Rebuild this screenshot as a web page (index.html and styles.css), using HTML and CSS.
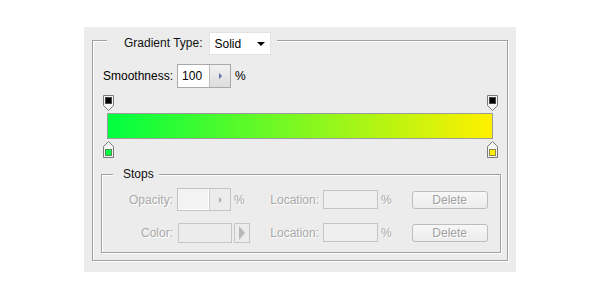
FILE: index.html
```html
<!DOCTYPE html>
<html>
<head>
<title>Gradient Editor</title>
<link rel="stylesheet" href="styles.css">
</head>
<body>

<div class="panel">
  <!-- Gradient group -->
  <fieldset class="group gradient-group">
    <legend class="group-title">
      <span class="title-text">Gradient Type:</span>
      <div class="dropdown"><span>Solid</span><span class="caret"></span></div>
    </legend>

    <div class="smooth-row">
      <span class="label">Smoothness:</span>
      <div class="spin">
        <span class="spin-value">100</span>
        <span class="spin-btn"><span class="tri"></span></span>
      </div>
      <span class="unit">%</span>
    </div>

    <!-- Opacity stops -->
    <div class="stop-row">
      <svg class="marker" width="11" height="16" viewBox="0 0 11 16">
        <path d="M0.5 0.5H10.5V10.5L5.5 15.5L0.5 10.5Z" fill="#f4f4f4" stroke="#7a7a7a"/>
        <rect x="2.5" y="2.5" width="6" height="6" fill="#000" stroke="#444"/>
      </svg>
      <svg class="marker" width="11" height="16" viewBox="0 0 11 16">
        <path d="M0.5 0.5H10.5V10.5L5.5 15.5L0.5 10.5Z" fill="#f4f4f4" stroke="#7a7a7a"/>
        <rect x="2.5" y="2.5" width="6" height="6" fill="#000" stroke="#444"/>
      </svg>
    </div>

    <div class="gradient-bar"></div>

    <!-- Color stops -->
    <div class="stop-row bottom">
      <svg class="marker" width="11" height="17" viewBox="0 0 11 17">
        <path d="M5.5 0.5L10.5 5.5V16.5H0.5V5.5Z" fill="#f4f4f4" stroke="#7a7a7a"/>
        <rect x="2.5" y="8.5" width="6" height="6" fill="#00ff40" stroke="#5a8a5a"/>
      </svg>
      <svg class="marker" width="11" height="17" viewBox="0 0 11 17">
        <path d="M5.5 0.5L10.5 5.5V16.5H0.5V5.5Z" fill="#f4f4f4" stroke="#7a7a7a"/>
        <rect x="2.5" y="8.5" width="6" height="6" fill="#fff000" stroke="#8a8a50"/>
      </svg>
    </div>

    <!-- Stops group -->
    <fieldset class="group stops-group">
      <legend class="stops-title">Stops</legend>

      <div class="field-row first">
        <span class="field-label">Opacity:</span>
        <div class="field-cell">
          <div class="spin off">
            <span class="spin-value"></span>
            <span class="spin-btn"><span class="tri"></span></span>
          </div>
          <span class="unit off">%</span>
        </div>
        <span class="loc-label">Location:</span>
        <div class="loc-input"></div>
        <span class="unit off loc-unit">%</span>
        <div class="btn">Delete</div>
      </div>

      <div class="field-row">
        <span class="field-label">Color:</span>
        <div class="field-cell">
          <div class="swatch"></div>
          <div class="swatch-btn"><span class="big-tri"></span></div>
        </div>
        <span class="loc-label">Location:</span>
        <div class="loc-input"></div>
        <span class="unit off loc-unit">%</span>
        <div class="btn">Delete</div>
      </div>
    </fieldset>
  </fieldset>
</div>

</body>
</html>
```

FILE: styles.css
```css
/* Page */
body {
  margin: 0;
  background: #fff;
  font-family: 'Liberation Sans', Arial, sans-serif;
  font-size: 12px;
  color: #111;
}

/* Grey dialog panel */
.panel {
  width: 432px;
  height: 245px;
  margin: 27px 84px 0;
  padding: 5px 0 0 8px;
  box-sizing: border-box;
  background: #ececec;
  overflow: hidden;
}

/* Etched group boxes */
.group {
  margin: 0;
  min-width: 0;
  box-sizing: border-box;
  border: 1px solid #a0a0a0;
  box-shadow: 1px 1px 0 #fff, inset 1px 1px 0 #fff;
}

.gradient-group {
  width: 416px;
  padding: 0 0 7px 8px;
}

.group-title {
  display: flex;
  align-items: flex-start;
  gap: 6px;
  height: 16px;
  margin-left: 6px;
  padding: 0 6px 0 17px;
  background: #ececec;
}

.title-text { line-height: 23px; }

/* Fake dropdown */
.dropdown {
  display: flex;
  align-items: center;
  justify-content: space-between;
  width: 62px;
  height: 23px;
  padding: 0 5px;
  box-sizing: border-box;
  background: #fff;
  border: 1px solid #e2e2e2;
  color: #000;
}

.caret {
  border-left: 4px solid transparent;
  border-right: 4px solid transparent;
  border-top: 4px solid #000;
  margin-top: 1px;
}

/* Smoothness row */
.smooth-row {
  display: flex;
  align-items: center;
  height: 24px;
  margin-top: 16px;
  padding-left: 2px;
}

.label { margin-right: 4px; color: #000; }

.unit { margin-left: 4px; color: #000; }

/* Spin box */
.spin {
  display: flex;
  width: 54px;
  height: 24px;
  box-sizing: border-box;
  border: 1px solid #a9a9a9;
}

.spin-value {
  width: 31px;
  padding-left: 4px;
  box-sizing: border-box;
  background: #fff;
  line-height: 22px;
  color: #000;
}

.spin-btn {
  flex: 1;
  display: flex;
  align-items: center;
  justify-content: center;
  border-left: 1px solid #bdbdbd;
  background: linear-gradient(#f2f2f2, #dcdcdc);
}

.tri {
  border-top: 3px solid transparent;
  border-bottom: 3px solid transparent;
  border-left: 3px solid #5b6ea6;
}

/* Gradient stops and bar */
.stop-row {
  display: flex;
  justify-content: space-between;
  width: 395px;
  height: 16px;
  margin: 7px 0 0 2px;
}

.stop-row.bottom {
  height: 17px;
  margin-top: 2px;
}

.marker { display: block; }

.gradient-bar {
  width: 386px;
  height: 26px;
  margin: 2px 0 0 6px;
  box-sizing: border-box;
  border: 1px solid #9c9c9c;
  background: linear-gradient(to right, #00ff40, #fff000);
}

/* Stops group */
.stops-group {
  width: 400px;
  margin-top: 9px;
  padding: 0 0 8px 11px;
}

.stops-title {
  padding: 0 5px 0 10px;
  line-height: 14px;
  background: #ececec;
  color: #111;
}

.field-row {
  display: flex;
  align-items: center;
  height: 23px;
  margin-top: 10px;
  color: #a9a9a9;
  text-shadow: 1px 1px 0 #fff;
}

.field-row.first { margin-top: 7px; }

.field-label {
  width: 60px;
  margin-right: 4px;
  text-align: right;
}

.field-cell {
  display: flex;
  align-items: center;
  width: 87px;
}

.spin.off {
  height: 23px;
  border-color: #c4c4c4;
}

.spin.off .spin-value {
  background: #f3f3f3;
  box-shadow: inset -1px -1px 0 #fff;
}

.spin.off .spin-btn {
  border-left-color: #cfcfcf;
  background: #ececec;
}

.spin.off .tri { border-left-color: #b0b0b0; }

.unit.off { margin-left: 3px; color: #a9a9a9; }

.swatch {
  width: 54px;
  height: 20px;
  margin-left: 1px;
  box-sizing: border-box;
  border: 1px solid #c6c6c6;
  background: #ececec;
}

.swatch-btn {
  display: flex;
  align-items: center;
  justify-content: center;
  width: 16px;
  height: 20px;
  margin-left: 2px;
  box-sizing: border-box;
  border: 1px solid #c6c6c6;
}

.big-tri {
  border-top: 7px solid transparent;
  border-bottom: 7px solid transparent;
  border-left: 6px solid #b8b8b8;
}

.loc-label {
  width: 55px;
  margin-right: 4px;
  text-align: right;
}

.loc-input {
  width: 55px;
  height: 19px;
  box-sizing: border-box;
  border: 1px solid #c4c4c4;
  background: #efefef;
}

.loc-unit { margin-left: 5px; }

/* Disabled button */
.btn {
  width: 76px;
  height: 18px;
  margin-left: 20px;
  box-sizing: border-box;
  border: 1px solid #bdbdbd;
  border-radius: 3px;
  background: linear-gradient(#f7f7f7, #ececec);
  line-height: 16px;
  text-align: center;
  color: #a0a0a0;
}
```
